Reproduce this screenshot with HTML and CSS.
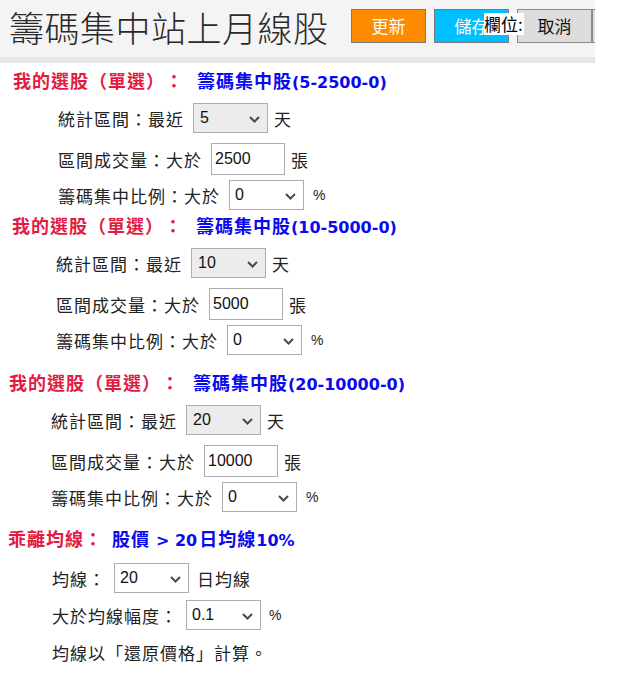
FILE: index.html
```html
<!DOCTYPE html>
<html lang="zh-Hant">
<head>
<meta charset="utf-8">
<title>籌碼集中站上月線股</title>
<link rel="stylesheet" href="styles.css">
</head>
<body>
<div class="page">
  <header class="topbar">
    <h1 class="title">籌碼集中站上月線股</h1>
    <div class="actions">
      <button class="btn btn-orange">更新</button>
      <button class="btn btn-blue">儲存</button>
      <button class="btn btn-gray">取消</button>
      <button class="btn btn-gray">顯示</button>
      <span class="field-label">欄位:</span>
    </div>
  </header>

  <main class="content">
    <section class="block s1">
      <div class="heading"><span class="red">我的選股（單選）：</span><span class="blue">籌碼集中股<span class="latin">(5-2500-0)</span></span></div>
      <div class="row first"><span class="lbl">統計區間：最近</span><span class="select grey"><span class="val">5</span><svg class="chev" viewBox="0 0 11 7"><path d="M1 1l4.5 4.5L10 1" /></svg></span><span class="unit">天</span></div>
      <div class="row second"><span class="lbl">區間成交量：大於</span><input class="num" type="text" value="2500"><span class="unit">張</span></div>
      <div class="row third"><span class="lbl">籌碼集中比例：大於</span><span class="select"><span class="val">0</span><svg class="chev" viewBox="0 0 11 7"><path d="M1 1l4.5 4.5L10 1" /></svg></span><span class="unit pct">%</span></div>
    </section>

    <section class="block s2">
      <div class="heading"><span class="red">我的選股（單選）：</span><span class="blue">籌碼集中股<span class="latin">(10-5000-0)</span></span></div>
      <div class="row first"><span class="lbl">統計區間：最近</span><span class="select grey"><span class="val">10</span><svg class="chev" viewBox="0 0 11 7"><path d="M1 1l4.5 4.5L10 1" /></svg></span><span class="unit">天</span></div>
      <div class="row second"><span class="lbl">區間成交量：大於</span><input class="num" type="text" value="5000"><span class="unit">張</span></div>
      <div class="row third"><span class="lbl">籌碼集中比例：大於</span><span class="select"><span class="val">0</span><svg class="chev" viewBox="0 0 11 7"><path d="M1 1l4.5 4.5L10 1" /></svg></span><span class="unit pct">%</span></div>
    </section>

    <section class="block s3">
      <div class="heading"><span class="red">我的選股（單選）：</span><span class="blue">籌碼集中股<span class="latin">(20-10000-0)</span></span></div>
      <div class="row first"><span class="lbl">統計區間：最近</span><span class="select grey"><span class="val">20</span><svg class="chev" viewBox="0 0 11 7"><path d="M1 1l4.5 4.5L10 1" /></svg></span><span class="unit">天</span></div>
      <div class="row second"><span class="lbl">區間成交量：大於</span><input class="num" type="text" value="10000"><span class="unit">張</span></div>
      <div class="row third"><span class="lbl">籌碼集中比例：大於</span><span class="select"><span class="val">0</span><svg class="chev" viewBox="0 0 11 7"><path d="M1 1l4.5 4.5L10 1" /></svg></span><span class="unit pct">%</span></div>
    </section>

    <section class="block s4">
      <div class="heading"><span class="red">乖離均線：</span><span class="blue b4">股價<span class="latin gt">&gt; 20</span>日均線<span class="latin">10%</span></span></div>
      <div class="row first"><span class="lbl">均線：</span><span class="select"><span class="val">20</span><svg class="chev" viewBox="0 0 11 7"><path d="M1 1l4.5 4.5L10 1" /></svg></span><span class="unit">日均線</span></div>
      <div class="row second"><span class="lbl">大於均線幅度：</span><span class="select"><span class="val">0.1</span><svg class="chev" viewBox="0 0 11 7"><path d="M1 1l4.5 4.5L10 1" /></svg></span><span class="unit pct">%</span></div>
      <div class="row note"><span class="lbl">均線以「還原價格」計算。</span></div>
    </section>
  </main>
</div>
</body>
</html>
```

FILE: styles.css
```css
html, body {
  margin: 0;
  padding: 0;
  background: #ffffff;
}

body {
  font-family: "Noto Sans CJK TC", "Noto Sans CJK SC", sans-serif;
  color: #222222;
  text-spacing-trim: space-all;
}

.page {
  width: 595px;
}

.topbar {
  height: 57px;
  display: flex;
  align-items: center;
  background: #f4f4f4;
  border-bottom: 6px solid #e6e6e6;
  overflow: hidden;
  white-space: nowrap;
  padding-left: 9px;
}

.title {
  margin: 0 0 3px;
  width: 321px;
  font-size: 35px;
  font-weight: 300;
  line-height: 40px;
  letter-spacing: 0.5px;
  color: #2a2a2a;
  flex-shrink: 0;
}

.actions {
  position: relative;
  display: flex;
  align-items: center;
  gap: 8px;
  margin-left: 21px;
  align-self: flex-start;
  margin-top: 9px;
  flex-shrink: 0;
}

.btn {
  flex-shrink: 0;
  width: 75px;
  height: 34px;
  border: 1px solid #7a7a7a;
  font-family: "Noto Sans CJK TC", sans-serif;
  font-size: 17px;
  line-height: 30px;
  padding: 0;
  color: #ffffff;
}

.btn-orange {
  background: #ff8c00;
}

.btn-blue {
  background: #00bfff;
}

.btn-gray {
  background: #dddddd;
  color: #111111;
  border-color: #8a8a8a;
}

.actions .btn-gray + .btn-gray {
  margin-left: -8px;
}

.field-label {
  position: absolute;
  left: 133px;
  top: 4px;
  height: 22px;
  padding-right: 1px;
  background: #ffffff;
  color: #000000;
  font-size: 17px;
  font-weight: 400;
  line-height: 22px;
  letter-spacing: 0;
}

.content {
  padding-top: 5px;
}

.heading {
  height: 24px;
  line-height: 24px;
  font-size: 18px;
  font-weight: 700;
  letter-spacing: 1px;
  white-space: nowrap;
}

.red {
  color: #e31b43;
}

.blue {
  color: #0a0af0;
  margin-left: 13px;
}

.blue.b4 {
  margin-left: 9px;
}

.latin {
  font-family: "DejaVu Sans", sans-serif;
  font-size: 16px;
  letter-spacing: 0;
}

.gt {
  margin: 0 2px 0 6px;
}

.row {
  display: flex;
  align-items: center;
  font-size: 17px;
  letter-spacing: 1px;
  white-space: nowrap;
}

.row.first {
  margin-top: 11px;
  height: 30px;
}

.row.second {
  margin-top: 10px;
  height: 32px;
}

.row.third {
  margin-top: 5px;
  height: 30px;
}

.lbl {
  margin-right: 9px;
}

.unit {
  margin-left: 6px;
}

.unit.pct {
  font-family: "Liberation Sans", sans-serif;
  font-size: 14px;
  margin-left: 9px;
}

.select {
  position: relative;
  box-sizing: border-box;
  width: 75px;
  height: 30px;
  border: 1px solid #adadad;
  background: #ffffff;
  display: flex;
  align-items: center;
  padding-left: 5px;
  font-family: "Liberation Sans", sans-serif;
  font-size: 16px;
  letter-spacing: 0;
  color: #111111;
}

.select.grey {
  background: #ececec;
  padding-left: 6px;
}

.chev {
  position: absolute;
  right: 7px;
  top: 12px;
  width: 11px;
  height: 7px;
}

.chev path {
  fill: none;
  stroke: #4a4a4a;
  stroke-width: 2;
}

.num {
  box-sizing: border-box;
  width: 74px;
  height: 32px;
  border: 1px solid #adadad;
  padding: 0 0 0 3px;
  margin: 0;
  font-family: "Liberation Sans", sans-serif;
  font-size: 16px;
  color: #111111;
  background: #ffffff;
  outline: none;
}

/* per-section offsets */
.s1 .heading { padding-left: 13px; }
.s1 .row { padding-left: 58px; }

.s2 { margin-top: 3px; }
.s2 .heading { padding-left: 12px; }
.s2 .row { padding-left: 56px; }

.s3 { margin-top: 15px; }
.s3 .heading { padding-left: 9px; }
.s3 .row { padding-left: 51px; }

.s4 { margin-top: 14px; }
.s4 .heading { padding-left: 8px; }
.s4 .row { padding-left: 52px; }
.s4 .row.first { margin-top: 13px; }
.s4 .row.second { margin-top: 7px; height: 30px; }
.s4 .row.note { margin-top: 10px; height: 24px; }
.s4 .lbl { margin-right: 8px; }
.s4 .unit { margin-left: 8px; }
```
